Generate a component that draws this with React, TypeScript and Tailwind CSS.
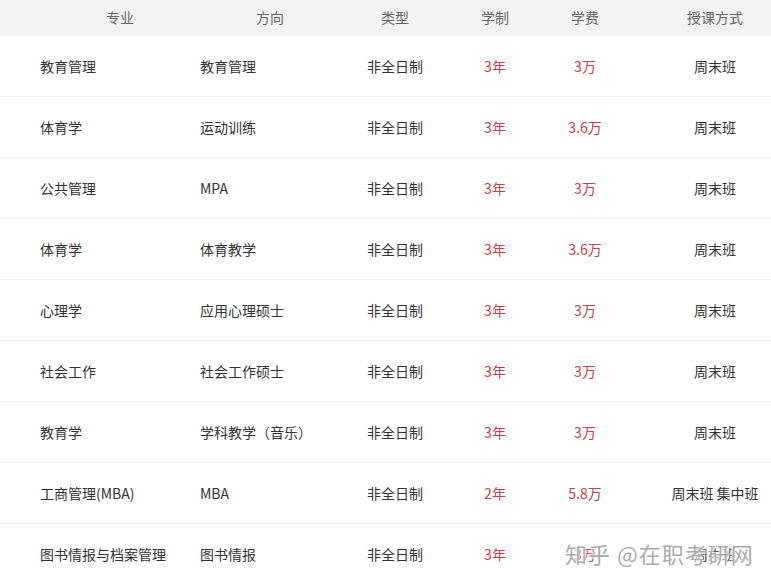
import React from "react";

interface Row {
  major: string;
  direction: string;
  type: string;
  years: string;
  fee: string;
  mode: string;
}

const rows: Row[] = [
  { major: "教育管理", direction: "教育管理", type: "非全日制", years: "3年", fee: "3万", mode: "周末班" },
  { major: "体育学", direction: "运动训练", type: "非全日制", years: "3年", fee: "3.6万", mode: "周末班" },
  { major: "公共管理", direction: "MPA", type: "非全日制", years: "3年", fee: "3万", mode: "周末班" },
  { major: "体育学", direction: "体育教学", type: "非全日制", years: "3年", fee: "3.6万", mode: "周末班" },
  { major: "心理学", direction: "应用心理硕士", type: "非全日制", years: "3年", fee: "3万", mode: "周末班" },
  { major: "社会工作", direction: "社会工作硕士", type: "非全日制", years: "3年", fee: "3万", mode: "周末班" },
  { major: "教育学", direction: "学科教学（音乐）", type: "非全日制", years: "3年", fee: "3万", mode: "周末班" },
  { major: "工商管理(MBA)", direction: "MBA", type: "非全日制", years: "2年", fee: "5.8万", mode: "周末班 集中班" },
  { major: "图书情报与档案管理", direction: "图书情报", type: "非全日制", years: "3年", fee: "3万", mode: "周末班" },
];

const grid = "grid grid-cols-[200px_140px_110px_90px_90px_1fr] items-center";

export default function App() {
  return (
    <div
      className="relative w-[771px] h-[583px] overflow-hidden bg-white text-[14px]"
      style={{ fontFamily: '"Noto Sans CJK SC", "Noto Sans", sans-serif' }}
    >
      <div className={`${grid} h-9 pb-[2px] bg-[#f2f2f2] text-[#666]`}>
        <div className="pl-10 text-center">专业</div>
        <div className="text-center">方向</div>
        <div className="text-center">类型</div>
        <div className="text-center">学制</div>
        <div className="text-center">学费</div>
        <div className="pl-[29px] text-center">授课方式</div>
      </div>
      {rows.map((r, i) => (
        <div key={i} className={`${grid} h-[61px] border-b border-[#f2f2f2] text-[#333]`}>
          <div className="pl-10 whitespace-nowrap">{r.major}</div>
          <div className="whitespace-nowrap">{r.direction}</div>
          <div className="text-center">{r.type}</div>
          <div className="text-center text-[#c2414b]">{r.years}</div>
          <div className="text-center text-[#c2414b]">{r.fee}</div>
          <div className="pl-[29px] text-center whitespace-nowrap">{r.mode}</div>
        </div>
      ))}
      <div
        className="absolute left-[565px] top-[542px] text-[22px] leading-none tracking-[1px] text-[#aaaaaa] whitespace-nowrap"
        style={{ textShadow: "0 0 2px #fff, 0 0 2px #fff, 0 0 3px #fff" }}
      >
        知乎 @在职考研网
      </div>
    </div>
  );
}
